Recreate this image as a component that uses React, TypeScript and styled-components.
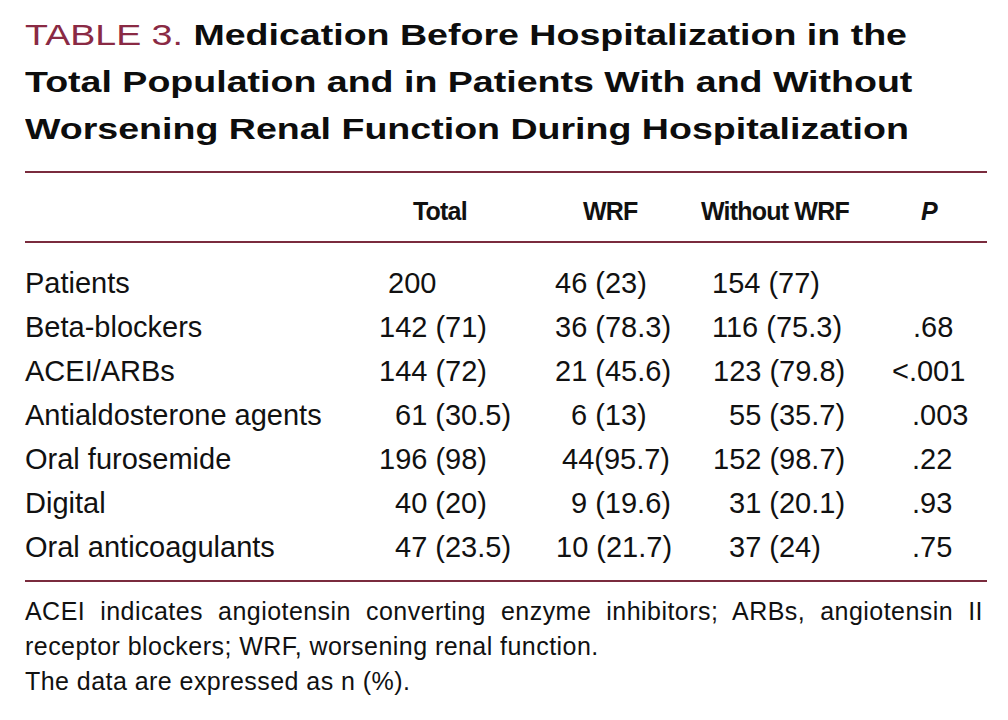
import React from "react";
import styled, { createGlobalStyle } from "styled-components";

const Global = createGlobalStyle`
  html, body { margin: 0; padding: 0; background: #ffffff; overflow: hidden; }
  body { font-family: "Liberation Sans", Arial, sans-serif; color: #111111; }
`;

const RULE = "#7a2b3d";

const Page = styled.div`
  width: 962px;
  padding: 12px 21px 0 25px;
`;

const Title = styled.h1`
  margin: 0;
  font-size: 29px;
  line-height: 47px;
  font-weight: 700;
  color: #0d0d0d;
`;

const TitleLine = styled.span`
  display: block;
  width: max-content;
  white-space: nowrap;
  transform: scaleX(1.295);
  transform-origin: 0 0;
`;

const TableNo = styled.span`
  font-weight: 400;
  color: #8a2a44;
`;

const Table = styled.div`
  margin-top: 18px;
  border-top: 2px solid ${RULE};
  border-bottom: 2px solid ${RULE};
`;

const Grid = styled.div`
  display: grid;
  grid-template-columns: 354px 176px 157px 200px 1fr;
`;

const HeadRow = styled(Grid)`
  padding: 23px 0 15px;
  border-bottom: 2px solid ${RULE};
  font-size: 25px;
  line-height: 30px;
  font-weight: 700;
  letter-spacing: -0.8px;
`;

const Body = styled.div`
  padding: 18px 0 11px;
`;

const Row = styled(Grid)`
  font-size: 29px;
  line-height: 44px;
`;

const Cell = styled.div<{ $shift?: number; $italic?: boolean }>`
  white-space: nowrap;
  margin-left: ${(p) => p.$shift ?? 0}px;
  font-style: ${(p) => (p.$italic ? "italic" : "normal")};
`;

const Notes = styled.div`
  margin-top: 12px;
  font-size: 25px;
  line-height: 35px;
  letter-spacing: 0.45px;
`;

const JustLine = styled.div`
  text-align: justify;
  text-align-last: justify;
  width: 958px;
`;

const NoteLine = styled.div`
  white-space: nowrap;
`;

type C = [string, number];
const rows: { label: string; cells: C[] }[] = [
  { label: "Patients", cells: [["200", 9], ["46 (23)", 0], ["154 (77)", 0], ["", 0]] },
  { label: "Beta-blockers", cells: [["142 (71)", 0], ["36 (78.3)", 0], ["116 (75.3)", 0], [".68", 1]] },
  { label: "ACEI/ARBs", cells: [["144 (72)", 0], ["21 (45.6)", 0], ["123 (79.8)", 1], ["<.001", -20]] },
  { label: "Antialdosterone agents", cells: [["61 (30.5)", 16], ["6 (13)", 16], ["55 (35.7)", 17], [".003", 0]] },
  { label: "Oral furosemide", cells: [["196 (98)", 0], ["44(95.7)", 7], ["152 (98.7)", 1], [".22", 0]] },
  { label: "Digital", cells: [["40 (20)", 16], ["9 (19.6)", 16], ["31 (20.1)", 17], [".93", 0]] },
  { label: "Oral anticoagulants", cells: [["47 (23.5)", 16], ["10 (21.7)", 1], ["37 (24)", 17], [".75", 0]] },
];

export default function App() {
  return (
    <>
      <Global />
      <Page>
        <Title>
          <TitleLine>
            <TableNo>TABLE 3.</TableNo> Medication Before Hospitalization in the
          </TitleLine>
          <TitleLine>Total Population and in Patients With and Without</TitleLine>
          <TitleLine>Worsening Renal Function During Hospitalization</TitleLine>
        </Title>
        <Table>
          <HeadRow>
            <Cell />
            <Cell $shift={34}>Total</Cell>
            <Cell $shift={28}>WRF</Cell>
            <Cell $shift={-11}>Without WRF</Cell>
            <Cell $shift={9} $italic>
              P
            </Cell>
          </HeadRow>
          <Body>
            {rows.map((r) => (
              <Row key={r.label}>
                <Cell>{r.label}</Cell>
                {r.cells.map(([t, s], i) => (
                  <Cell key={i} $shift={s}>
                    {t}
                  </Cell>
                ))}
              </Row>
            ))}
          </Body>
        </Table>
        <Notes>
          <JustLine>
            ACEI indicates angiotensin converting enzyme inhibitors; ARBs, angiotensin II
          </JustLine>
          <NoteLine>receptor blockers; WRF, worsening renal function.</NoteLine>
          <NoteLine>The data are expressed as n (%).</NoteLine>
        </Notes>
      </Page>
    </>
  );
}
